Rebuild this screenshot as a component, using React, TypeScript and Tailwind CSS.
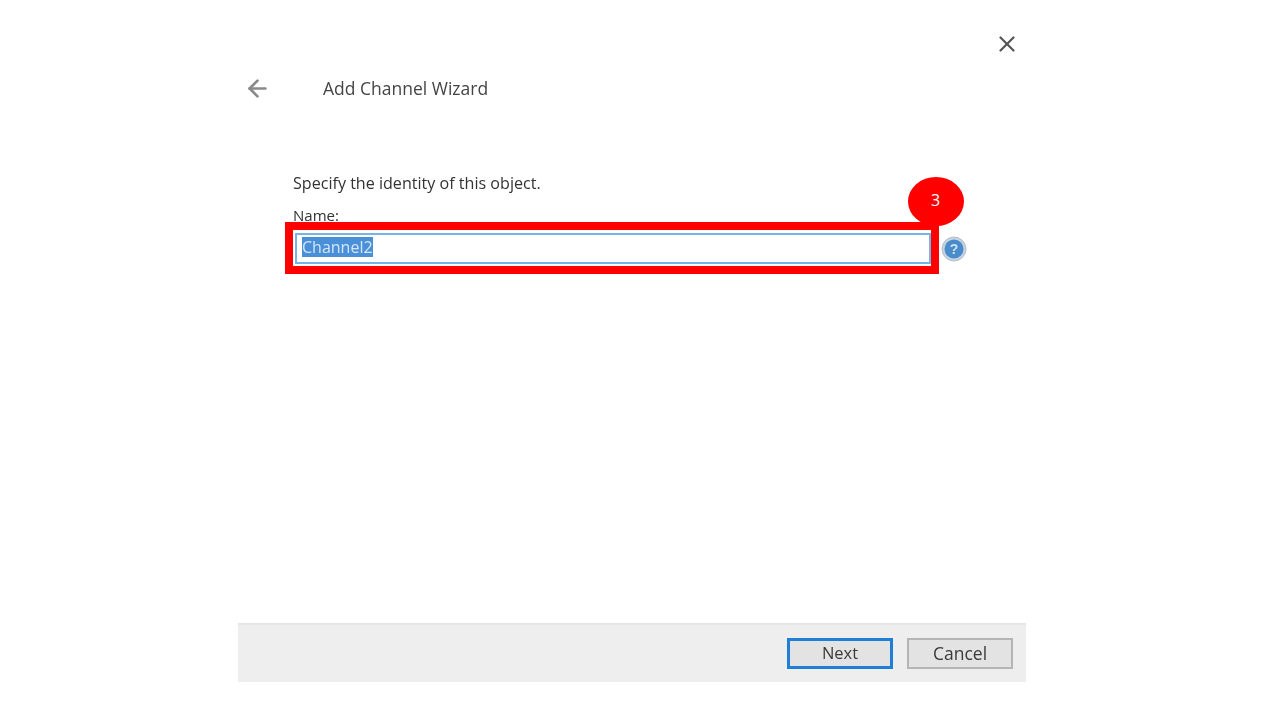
import { ArrowLeft, X } from "lucide-react";

function HelpIcon() {
  return (
    <svg width="26" height="26" viewBox="0 0 26 26" className="blur-[0.4px]">
      <circle cx="13" cy="13" r="12" fill="#c6d4e1" stroke="#b4bdc6" />
      <circle cx="13" cy="13" r="9.5" fill="#4a8ccb" />
      <text x="13" y="18" textAnchor="middle" fontSize="14" fontWeight="700" fill="#cfe2f3" fontFamily="Liberation Sans, sans-serif">
        ?
      </text>
    </svg>
  );
}

export default function App() {
  return (
    <div className="h-[720px] bg-white pl-[238px] font-['Open_Sans',sans-serif] text-[#333]">
      <div className="w-[788px] h-[682px] flex flex-col">
        <div className="flex justify-end pt-[31px] pr-[6px] h-[66px]">
          <X size={26} strokeWidth={2} className="text-[#555] blur-[0.4px]" />
        </div>
        <div className="flex items-center h-[44px] pl-[6px] blur-[0.4px]">
          <ArrowLeft size={27} strokeWidth={2.4} className="text-[#8a8a8a]" />
          <span className="ml-[52px] text-[17.5px] text-[#444]">Add Channel Wizard</span>
        </div>
        <div className="flex-1 pl-[55px] pt-[62px]">
          <p className="text-[16.1px] leading-[22px] blur-[0.4px]">Specify the identity of this object.</p>
          <p className="mt-[11px] text-[15px] leading-[20px] blur-[0.4px]">Name:</p>
          <div className="relative mt-[8px] ml-[2px] flex items-center w-[672px]">
            <div className="w-[636px] h-[31px] border-2 border-[#76b3e6] bg-white flex items-center pl-[5px] pb-[3px]">
              <span className="bg-[#4a90d8] text-[#d5e6f6] text-[16px] leading-[20px] blur-[0.3px]">Channel2</span>
            </div>
            <div className="ml-[10px]">
              <HelpIcon />
            </div>
            <div className="absolute left-[-10px] top-[-11px] w-[654px] h-[52px] border-[8px] border-[#ff0000]" />
            <div className="absolute left-[613px] top-[-56px] w-[56px] h-[49px] rounded-[50%] bg-[#ff0000] text-white text-[16px] flex items-center justify-center pb-[3px] pr-[1px]">
              3
            </div>
          </div>
        </div>
        <div className="h-[59px] bg-[#eeeeee] border-t-2 border-[#e6e6e6] flex items-center justify-end gap-[14px] pr-[13px]">
          <button className="w-[106px] h-[31px] border-[3px] border-[#1f7fd4] bg-[#e3e3e3] text-[16.5px] text-[#3a3a3a] blur-[0.4px]">
            Next
          </button>
          <button className="w-[106px] h-[31px] border-2 border-[#b5b5b5] bg-[#e3e3e3] text-[17.5px] text-[#3a3a3a] blur-[0.4px]">
            Cancel
          </button>
        </div>
      </div>
    </div>
  );
}
